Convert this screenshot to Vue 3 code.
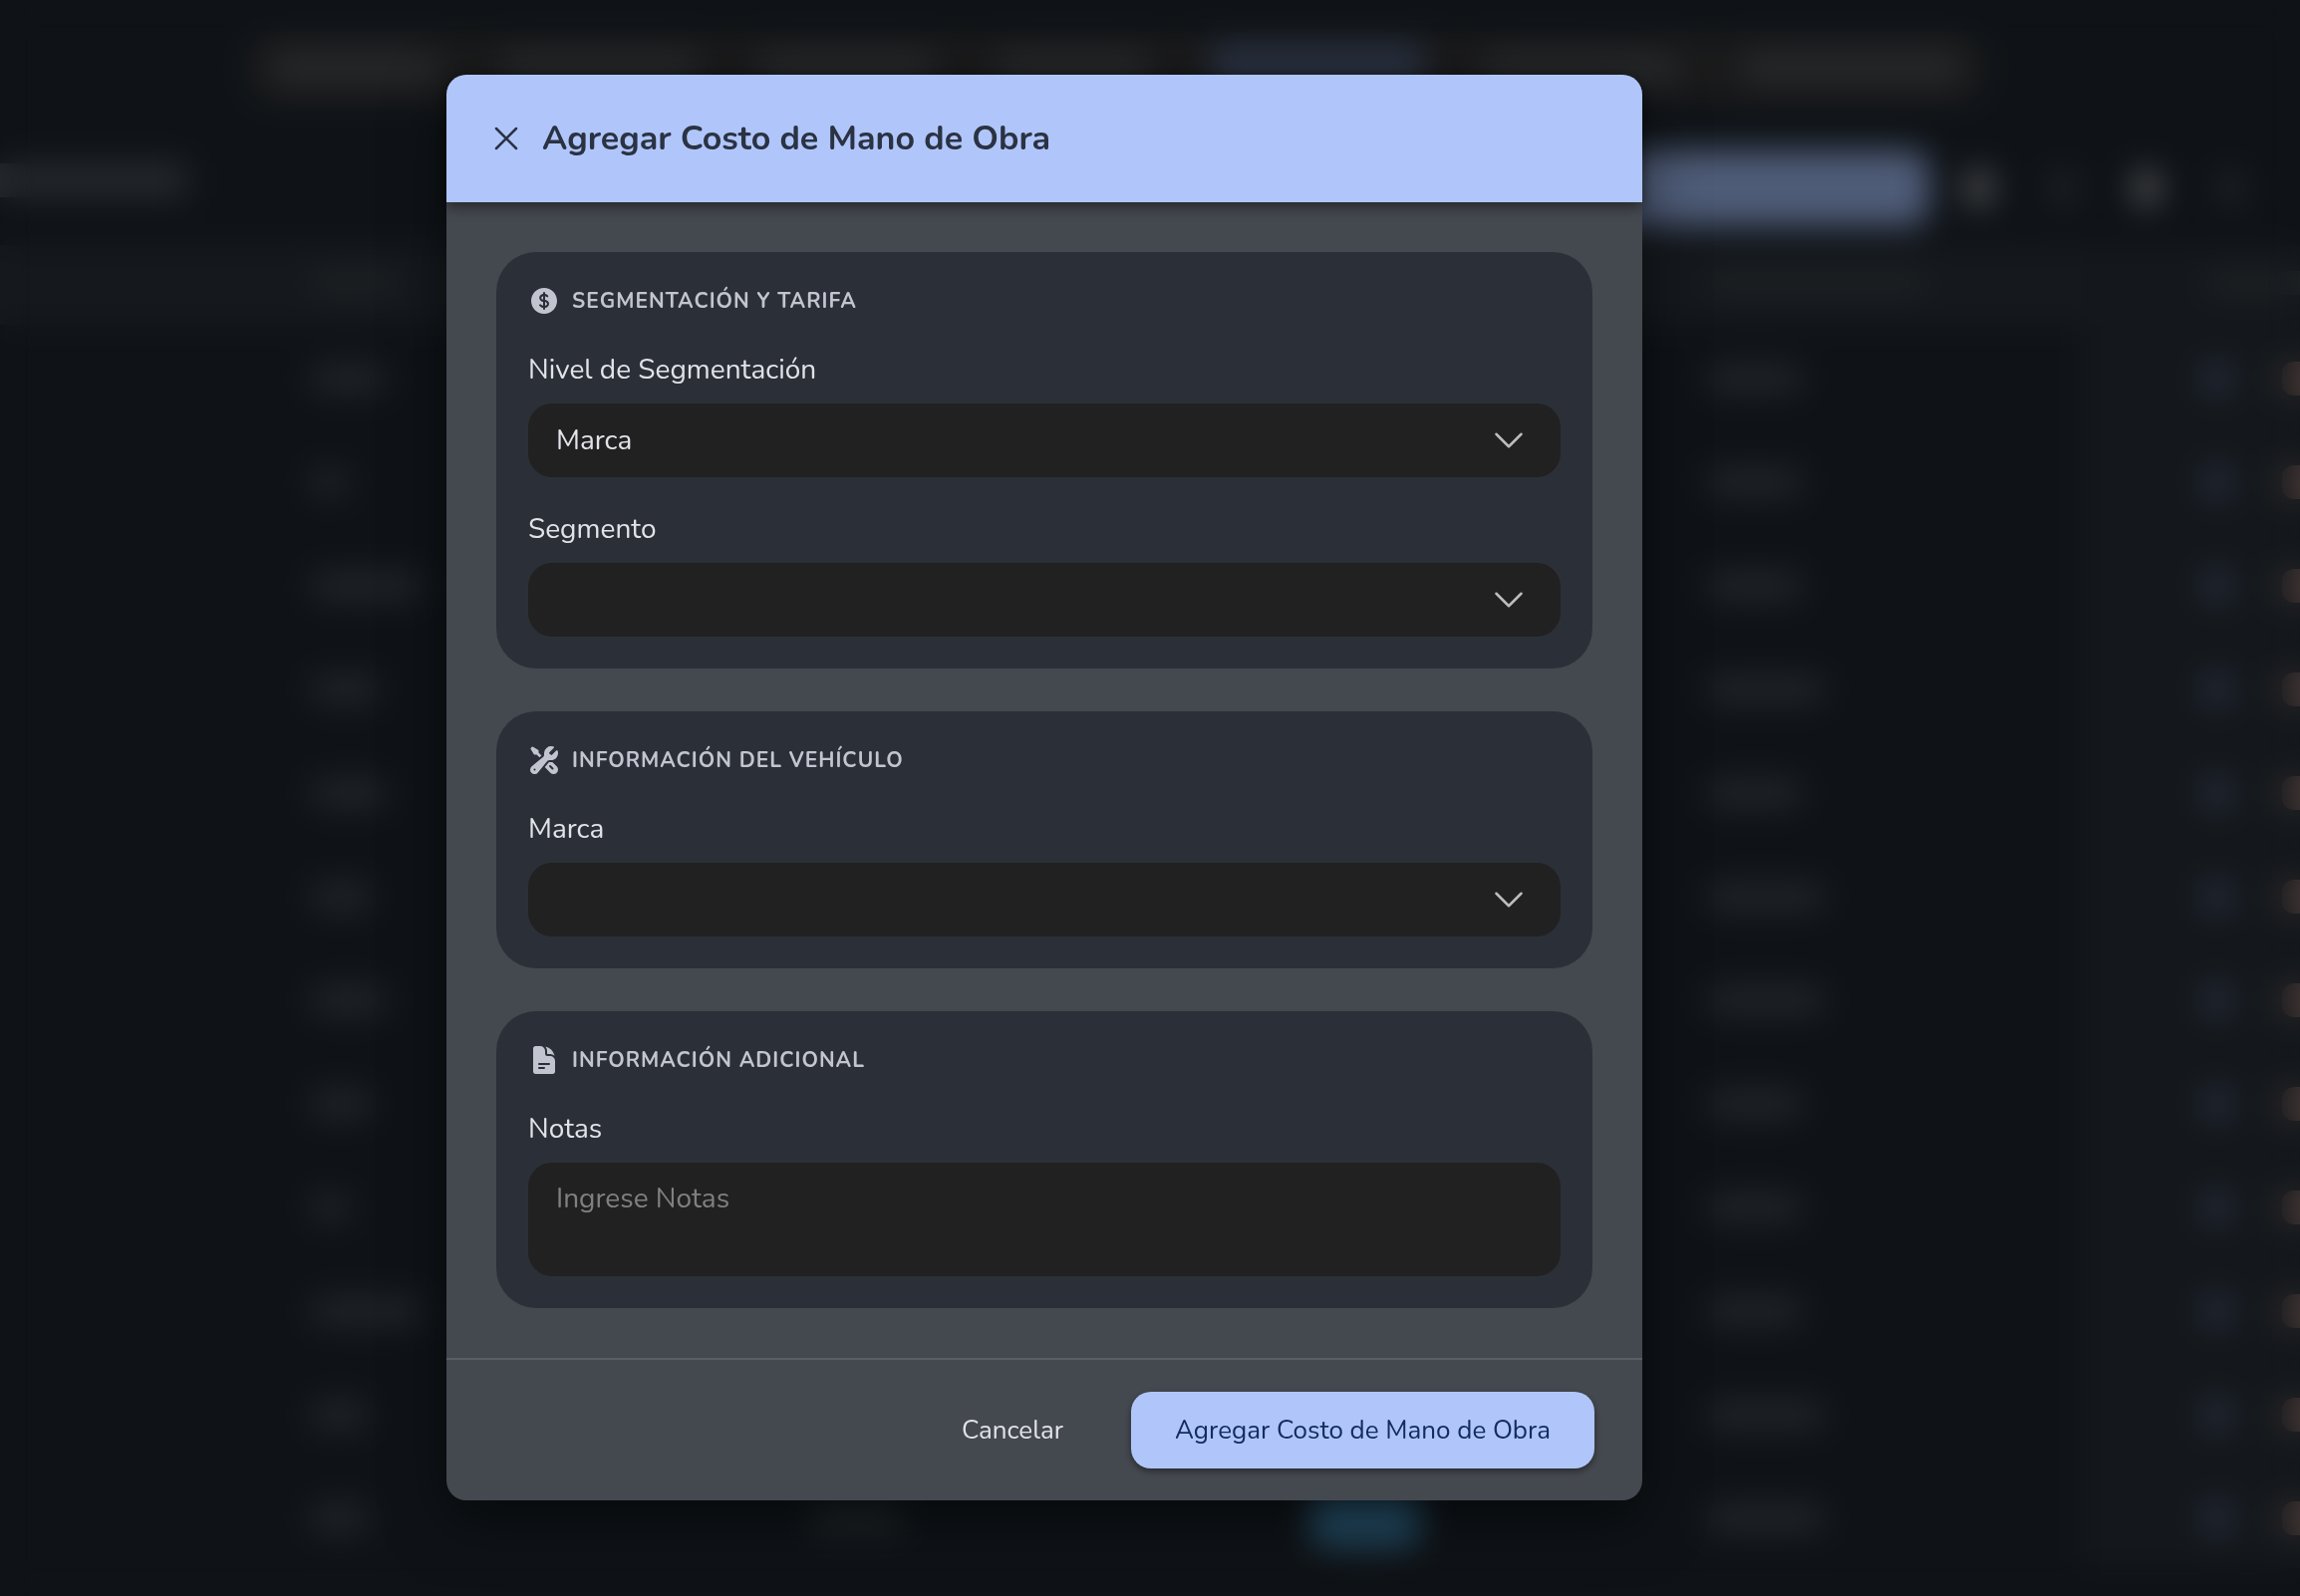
<script setup>
import { ref } from 'vue'

const level = ref('Marca')
const segment = ref('')
const brand = ref('')
const notes = ref('')

const navItems = [170, 198, 177, 155, 213, 199, 220]
const rows = [
  { name: 76, rate: 96 },
  { name: 36, rate: 96 },
  { name: 112, rate: 96 },
  { name: 68, rate: 118 },
  { name: 76, rate: 96 },
  { name: 60, rate: 118 },
  { name: 76, rate: 118 },
  { name: 60, rate: 96 },
  { name: 38, rate: 96 },
  { name: 112, rate: 96 },
  { name: 56, rate: 118 },
  { name: 56, rate: 118, status: true },
]
</script>

<template>
  <div class="page">
    <div class="backdrop-page" aria-hidden="true">
      <div class="nav">
        <span
          v-for="(width, i) in navItems"
          :key="i"
          class="nav-item"
          :class="{ active: i === 4 }"
          :style="{ width: width + 'px' }"
        ></span>
      </div>
      <div class="toolbar">
        <span class="page-title"></span>
        <span class="toolbar-button"></span>
        <span class="tool bright"></span>
        <span class="tool"></span>
        <span class="tool bright"></span>
        <span class="tool"></span>
      </div>
      <div class="list">
        <div class="list-row list-head">
          <span class="cell"><i class="bar head-bar short"></i></span>
          <span class="cell"></span>
          <span class="cell"></span>
          <span class="cell"><i class="bar head-bar long"></i></span>
          <span class="cell actions"><i class="bar head-bar long"></i></span>
        </div>
        <div v-for="(row, i) in rows" :key="i" class="list-row">
          <span class="cell"><i class="bar" :style="{ width: row.name + 'px' }"></i></span>
          <span class="cell"><i v-if="row.status" class="bar short"></i></span>
          <span class="cell"><i v-if="row.status" class="status"></i></span>
          <span class="cell"><i class="bar" :style="{ width: row.rate + 'px' }"></i></span>
          <span class="cell actions"><i class="edit"></i><i class="remove"></i></span>
        </div>
      </div>
    </div>

    <div class="overlay">
      <form class="dialog" role="dialog" aria-labelledby="dialog-title" @submit.prevent>
        <header class="dialog-head">
          <button type="button" class="close" aria-label="Cerrar">
            <svg viewBox="0 0 24 24" class="line-icon"><path d="M6 18 18 6M6 6l12 12" /></svg>
          </button>
          <h1 id="dialog-title">Agregar Costo de Mano de Obra</h1>
        </header>

        <div class="dialog-body">
          <section class="card">
            <h2>
              <svg viewBox="0 0 24 24" class="solid-icon">
                <path d="M10.464 8.746c.227-.18.497-.311.786-.394v2.795a2.252 2.252 0 0 1-.786-.393c-.394-.313-.546-.681-.546-1.004 0-.323.152-.691.546-1.004ZM12.75 15.662v-2.824c.347.085.664.228.921.421.427.32.579.686.579.991 0 .305-.152.671-.579.991a2.534 2.534 0 0 1-.921.42Z" />
                <path d="M12 2.25c-5.385 0-9.75 4.365-9.75 9.75s4.365 9.75 9.75 9.75 9.75-4.365 9.75-9.75S17.385 2.25 12 2.25ZM12.75 6a.75.75 0 0 0-1.5 0v.816a3.836 3.836 0 0 0-1.72.756c-.712.566-1.112 1.35-1.112 2.178 0 .829.4 1.612 1.113 2.178.502.4 1.102.647 1.719.756v2.978a2.536 2.536 0 0 1-.921-.421l-.879-.66a.75.75 0 0 0-.9 1.2l.879.66c.533.4 1.169.645 1.821.75V18a.75.75 0 0 0 1.5 0v-.81a4.124 4.124 0 0 0 1.821-.749c.745-.559 1.179-1.344 1.179-2.191 0-.847-.434-1.632-1.179-2.191a4.122 4.122 0 0 0-1.821-.75V8.354c.29.082.559.213.786.393l.415.33a.75.75 0 0 0 .933-1.175l-.415-.33a3.836 3.836 0 0 0-1.719-.755V6Z" />
              </svg>
              Segmentación y Tarifa
            </h2>
            <div class="field">
              <label for="level">Nivel de Segmentación</label>
              <div class="select-box">
                <select id="level" v-model="level">
                  <option>Marca</option>
                </select>
                <svg viewBox="0 0 24 24" class="line-icon chevron"><path d="m19.5 8.25-7.5 7.5-7.5-7.5" /></svg>
              </div>
            </div>
            <div class="field">
              <label for="segment">Segmento</label>
              <div class="select-box">
                <select id="segment" v-model="segment">
                  <option value=""></option>
                </select>
                <svg viewBox="0 0 24 24" class="line-icon chevron"><path d="m19.5 8.25-7.5 7.5-7.5-7.5" /></svg>
              </div>
            </div>
          </section>

          <section class="card">
            <h2>
              <svg viewBox="0 0 24 24" class="solid-icon">
                <path d="M12 6.75a5.25 5.25 0 0 1 6.775-5.025.75.75 0 0 1 .313 1.248l-3.32 3.319c.063.475.276.934.641 1.299.365.365.824.578 1.3.64l3.318-3.319a.75.75 0 0 1 1.248.313 5.25 5.25 0 0 1-5.472 6.756c-1.018-.086-1.87.1-2.309.634L7.344 21.3A3.298 3.298 0 1 1 2.7 16.657l8.684-7.151c.533-.44.72-1.291.634-2.309A5.342 5.342 0 0 1 12 6.75ZM4.117 19.125a.75.75 0 0 1 .75-.75h.008a.75.75 0 0 1 .75.75v.008a.75.75 0 0 1-.75.75h-.008a.75.75 0 0 1-.75-.75v-.008Z" />
                <path d="m10.076 8.64-2.201-2.2V4.874a.75.75 0 0 0-.364-.643l-3.75-2.25a.75.75 0 0 0-.916.113l-.75.75a.75.75 0 0 0-.113.916l2.25 3.75a.75.75 0 0 0 .643.364h1.564l2.062 2.062 1.575-1.297Z" />
                <path d="m12.556 17.329 4.183 4.182a3.375 3.375 0 0 0 4.773-4.773l-3.306-3.305a6.803 6.803 0 0 1-1.53.043c-.394-.034-.682-.006-.867.042a.589.589 0 0 0-.167.063l-3.086 3.748Zm3.414-1.36a.75.75 0 0 1 1.06 0l1.875 1.876a.75.75 0 1 1-1.06 1.06L15.97 17.03a.75.75 0 0 1 0-1.06Z" />
              </svg>
              Información del Vehículo
            </h2>
            <div class="field">
              <label for="brand">Marca</label>
              <div class="select-box">
                <select id="brand" v-model="brand">
                  <option value=""></option>
                </select>
                <svg viewBox="0 0 24 24" class="line-icon chevron"><path d="m19.5 8.25-7.5 7.5-7.5-7.5" /></svg>
              </div>
            </div>
          </section>

          <section class="card">
            <h2>
              <svg viewBox="0 0 24 24" class="solid-icon">
                <path d="M5.625 1.5c-1.036 0-1.875.84-1.875 1.875v17.25c0 1.035.84 1.875 1.875 1.875h12.75c1.035 0 1.875-.84 1.875-1.875V12.75A3.75 3.75 0 0 0 16.5 9h-1.875a1.875 1.875 0 0 1-1.875-1.875V5.25A3.75 3.75 0 0 0 9 1.5H5.625ZM7.5 15a.75.75 0 0 1 .75-.75h7.5a.75.75 0 0 1 0 1.5h-7.5A.75.75 0 0 1 7.5 15Zm.75 2.25a.75.75 0 0 0 0 1.5H12a.75.75 0 0 0 0-1.5H8.25Z" />
                <path d="M12.971 1.816A5.23 5.23 0 0 1 14.25 5.25v1.875c0 .207.168.375.375.375H16.5a5.23 5.23 0 0 1 3.434 1.279 9.768 9.768 0 0 0-6.963-6.963Z" />
              </svg>
              Información Adicional
            </h2>
            <div class="field">
              <label for="notes">Notas</label>
              <textarea id="notes" v-model="notes" placeholder="Ingrese Notas"></textarea>
            </div>
          </section>
        </div>

        <footer class="dialog-foot">
          <button type="button" class="btn">Cancelar</button>
          <button type="submit" class="btn primary">Agregar Costo de Mano de Obra</button>
        </footer>
      </form>
    </div>
  </div>
</template>

<style>
body {
  background: #0f1317;
}
</style>

<style scoped>
.page {
  min-height: 100vh;
  font-family: Nunito, Lato, "Open Sans", sans-serif;
  color: #e2e2e9;
  overflow: hidden;
}

.page *,
.page *::before {
  box-sizing: border-box;
}

/* List page that shows through behind the dialog */
.backdrop-page {
  height: 100vh;
  overflow: hidden;
  padding-top: 34px;
}

.nav {
  display: flex;
  align-items: center;
  justify-content: space-between;
  width: 1740px;
  height: 68px;
  margin-left: 250px;
  padding: 0 22px;
  border-radius: 24px;
  background: #1a1a1b;
}

.nav-item {
  height: 32px;
  border-radius: 12px;
  background: #27282b;
}

.nav-item.active {
  height: 52px;
  background: #28303f;
}

.toolbar {
  display: flex;
  align-items: center;
  height: 138px;
  padding: 0 56px 0 0;
  margin-top: 18px;
  margin-bottom: -12px;
}

.page-title {
  width: 188px;
  height: 34px;
  margin: 0 auto 16px 0;
  background: #25292c;
}

.toolbar-button {
  width: 520px;
  height: 76px;
  margin-right: 36px;
  border-radius: 20px;
  background: #4f5c78;
}

.tool {
  width: 28px;
  height: 36px;
  margin-right: 56px;
  border-radius: 14px;
  background: #1f2326;
}

.tool:last-child {
  margin-right: 0;
}

.tool.bright {
  background: #505052;
}

.list-row {
  display: grid;
  grid-template-columns: 502px 500px 398px 380px 1fr;
  height: 104px;
  padding-left: 312px;
}

.list-head {
  height: 80px;
  background: #15191d;
}

.cell {
  display: flex;
  align-items: center;
  padding-top: 4px;
}

.list-head .cell {
  padding-top: 0;
  padding-bottom: 4px;
}

.bar {
  height: 28px;
  border-radius: 10px;
  background: #212528;
}

.short {
  width: 92px;
}

.long {
  width: 220px;
}

.head-bar {
  height: 24px;
  background: #1d2123;
}

.status {
  width: 112px;
  height: 56px;
  border-radius: 20px;
  background: #224a62;
}

.actions {
  gap: 52px;
  margin-left: -4px;
  padding-left: 124px;
  background: #14181c;
}

.edit,
.remove {
  width: 26px;
  height: 34px;
  border-radius: 12px;
  background: #272e40;
}

.remove {
  width: 36px;
  background: #443735;
}

/* Dialog */
.overlay {
  position: fixed;
  inset: 0;
  display: flex;
  align-items: flex-start;
  justify-content: center;
  padding: 75px 212px 75px 0;
  overflow: auto;
  backdrop-filter: blur(16px);
}

.dialog {
  width: 100%;
  max-width: 1200px;
  border-radius: 20px;
  background: #44484f;
  box-shadow: 0 20px 60px rgba(0, 0, 0, 0.5);
}

.dialog-head {
  position: relative;
  display: flex;
  align-items: center;
  gap: 16px;
  height: 128px;
  padding: 0 40px;
  border-radius: 20px 20px 0 0;
  background: #b0c6fb;
  color: #2b3242;
  box-shadow: 0 4px 14px rgba(0, 0, 0, 0.5);
}

h1 {
  margin: 0;
  font-size: 34px;
  line-height: 48px;
  font-weight: 700;
}

button {
  border: 0;
  background: none;
  color: inherit;
  font: inherit;
  cursor: pointer;
}

.close {
  display: flex;
  padding: 0;
}

.line-icon {
  width: 40px;
  height: 40px;
  fill: none;
  stroke: currentColor;
  stroke-width: 1.5;
  stroke-linecap: round;
  stroke-linejoin: round;
}

.solid-icon {
  width: 32px;
  height: 32px;
  fill: currentColor;
  fill-rule: evenodd;
}

.dialog-body {
  display: flex;
  flex-direction: column;
  gap: 43px;
  padding: 50px;
}

.card {
  display: flex;
  flex-direction: column;
  gap: 32px;
  padding: 32px;
  border-radius: 40px;
  background: #2b3038;
}

h2 {
  display: flex;
  align-items: center;
  gap: 12px;
  margin: 0;
  font-size: 21px;
  line-height: 34px;
  font-weight: 700;
  letter-spacing: 1px;
  text-transform: uppercase;
  color: #c2c5cf;
}

.field {
  display: flex;
  flex-direction: column;
  gap: 14px;
}

label {
  font-size: 28px;
  line-height: 40px;
}

.select-box {
  position: relative;
}

select,
textarea {
  display: block;
  width: 100%;
  height: 74px;
  padding: 0 28px;
  border: 0;
  border-radius: 24px;
  outline: 0;
  appearance: none;
  background: #212121;
  color: #e2e2e9;
  font: inherit;
  font-size: 28px;
  line-height: 40px;
}

textarea {
  height: 114px;
  padding: 16px 28px;
  resize: none;
}

textarea::placeholder {
  color: #808080;
  opacity: 1;
}

.chevron {
  position: absolute;
  top: 17px;
  right: 32px;
  color: #bdbdbd;
  pointer-events: none;
}

.dialog-foot {
  display: flex;
  justify-content: flex-end;
  gap: 24px;
  padding: 32px 48px;
  border-top: 2px solid #5a5e66;
}

.btn {
  height: 77px;
  padding: 0 44px;
  border-radius: 20px;
  font-size: 26px;
}

.primary {
  background: #b0c6fb;
  color: #142c60;
  box-shadow: 0 3px 6px rgba(0, 0, 0, 0.4);
}
</style>
